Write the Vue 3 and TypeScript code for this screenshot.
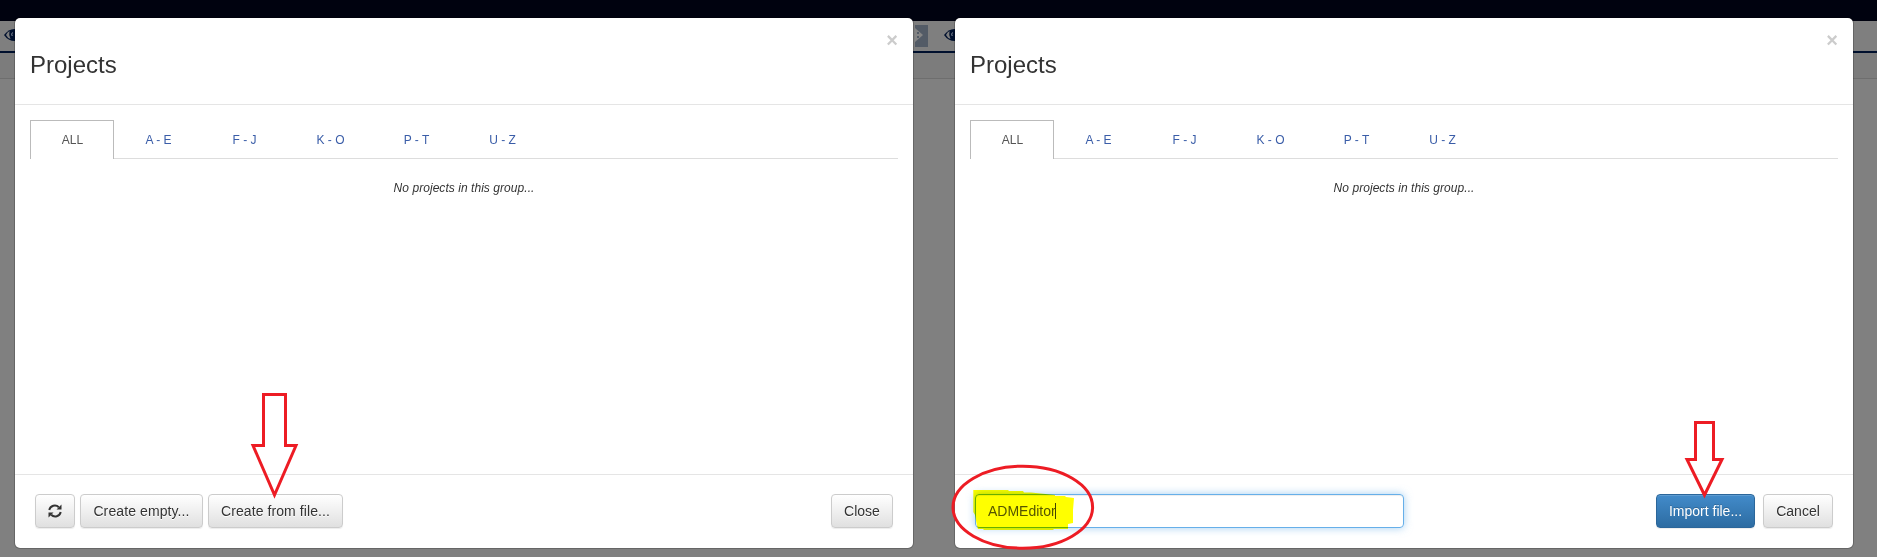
<script setup lang="ts">
interface Dialog {
  id: string
  mode: 'browse' | 'import'
}

const dialogs: Dialog[] = [
  { id: 'browse', mode: 'browse' },
  { id: 'import', mode: 'import' },
]
const tabs: string[] = ['ALL', 'A - E', 'F - J', 'K - O', 'P - T', 'U - Z']
const projectName = 'ADMEditor'
</script>

<template>
  <div class="screen">
    <div class="topbar"></div>
    <div class="toolbar"></div>
    <div class="subbar"></div>

    <svg class="overlay" width="1877" height="557" viewBox="0 0 1877 557">
      <g v-for="x in [0, 940]" :key="x" :transform="`translate(${x} 0)`">
        <path d="M4 35Q9 28.500 15 29V41Q8 41 4 35Z" fill="#00102e" />
        <path d="M6 35Q7.500 32 9.500 31Q8.500 35 10.500 39Q7.500 38 6 35Z" fill="#7e7e7e" />
        <path d="M12.500 32.500Q11 34 12.200 36" fill="none" stroke="#8a929e" />
      </g>
      <rect x="915" y="25" width="13" height="22" fill="#535b66" />
      <path d="M915 28L923 35L915 42Z" fill="#858585" />
      <path d="M917 32h2v2h-2zM917 36h2v2h-2z" fill="#535b66" />
    </svg>

    <main class="dialogs">
      <section v-for="d in dialogs" :key="d.id" class="modal">
        <header class="modal-header">
          <h3>Projects</h3>
          <span class="dismiss">×</span>
        </header>
        <div class="modal-body">
          <ul class="tabs">
            <li v-for="(t, i) in tabs" :key="t" :class="{ active: i === 0 }">{{ t }}</li>
          </ul>
          <p class="empty">No projects in this group...</p>
        </div>
        <footer class="modal-footer">
          <template v-if="d.mode === 'browse'">
            <button class="btn icon-btn" aria-label="Refresh">
              <svg width="14" height="14" viewBox="0 0 14 14">
                <path d="M1.300 6A5.600 5.600 0 0 1 10.800 3.300M12.700 8A5.600 5.600 0 0 1 3.200 10.700" fill="none" stroke="#333" stroke-width="2" />
                <path d="M13.500 0.500V5.500H8.500ZM0.500 13.500V8.500H5.500Z" fill="#333" />
              </svg>
            </button>
            <button class="btn empty-btn">Create empty...</button>
            <button class="btn file-btn">Create from file...</button>
            <button class="btn close-btn">Close</button>
          </template>
          <template v-else>
            <div class="field">{{ projectName }}<i class="caret"></i></div>
            <button class="btn primary">Import file...</button>
            <button class="btn cancel-btn">Cancel</button>
          </template>
        </footer>
      </section>
    </main>

    <svg class="overlay marker" width="1877" height="557" viewBox="0 0 1877 557">
      <path d="M973.300 490H1008L1009 491H1023L1024 492.500H1031L1055 495V496H1065L1066 497L1074 498L1073 510V523L1068 524V529H1054L1053 530H984L983 529H978L977 526L975 515L973.300 512Z" fill="#ff0" />
    </svg>
    <svg class="overlay" width="1877" height="557" viewBox="0 0 1877 557">
      <g fill="none" stroke="#ed1c24" stroke-width="3">
        <path d="M263.500 394.500H285.500V445.500H296L274.500 495L253 445.500H263.500Z" />
        <path d="M1695.500 422.500H1713.500V459.500H1722L1704.500 495L1687 459.500H1695.500Z" />
        <ellipse cx="1022.800" cy="507.200" rx="69.800" ry="41" />
      </g>
    </svg>
  </div>
</template>

<style>
body {
  margin: 0;
}
</style>

<style scoped>
.screen {
  position: relative;
  width: 1877px;
  height: 557px;
  overflow: hidden;
  background: #808080;
  font-family: "Liberation Sans", Arial, sans-serif;
  color: #333;
}
.topbar {
  height: 21px;
  background: #00020f;
}
.toolbar {
  height: 30px;
  background: #7f7f7f;
  border-bottom: 2px solid #00102e;
}
.subbar {
  height: 25px;
  background: #7c7c7c;
  border-bottom: 1px solid #6e6e6e;
}
.overlay {
  position: absolute;
  left: 0;
  top: 0;
  pointer-events: none;
}
.marker {
  mix-blend-mode: multiply;
}
.dialogs {
  position: absolute;
  left: 14px;
  top: 17px;
  display: flex;
  gap: 40px;
}
.modal {
  box-sizing: border-box;
  width: 900px;
  height: 532px;
  display: flex;
  flex-direction: column;
  background: #fff;
  background-clip: padding-box;
  border: 1px solid rgba(0, 0, 0, 0.2);
  border-radius: 6px;
}
.modal-header {
  display: flex;
  justify-content: space-between;
  height: 86px;
  padding: 0 15px;
  border-bottom: 1px solid #e5e5e5;
}
h3 {
  margin: 34px 0 0;
  font-size: 24px;
  line-height: 26px;
  font-weight: 400;
}
.dismiss {
  margin-top: 11px;
  font-size: 20px;
  line-height: 22px;
  font-weight: 700;
  color: #ccc;
}
.modal-body {
  flex: 1;
  padding: 15px;
}
.tabs {
  display: flex;
  gap: 2px;
  margin: 0;
  padding: 0;
  list-style: none;
  height: 38px;
  border-bottom: 1px solid #ddd;
}
.tabs li {
  box-sizing: border-box;
  width: 84px;
  height: 38px;
  padding: 1px 0 0 1px;
  font-size: 12px;
  line-height: 38px;
  text-align: center;
  color: #3a5da8;
}
.tabs .active {
  height: 39px;
  padding-top: 0;
  background: #fff;
  border: 1px solid #bbb;
  border-bottom: 0;
  color: #555;
}
.empty {
  margin: 21px 0 0;
  font-size: 12px;
  line-height: 17px;
  font-style: italic;
  letter-spacing: 0.05px;
  text-align: center;
}
.modal-footer {
  display: flex;
  height: 54px;
  padding: 19px 20px 0;
  border-top: 1px solid #e5e5e5;
}
.btn {
  box-sizing: border-box;
  height: 34px;
  padding: 0;
  border: 1px solid #ccc;
  border-radius: 4px;
  background: linear-gradient(#fff, #e0e0e0);
  box-shadow: inset 0 1px 0 rgba(255, 255, 255, 0.15), 0 1px 1px rgba(0, 0, 0, 0.075);
  font: 14px/20px "Liberation Sans", Arial, sans-serif;
  color: #333;
  text-shadow: 0 1px 0 #fff;
}
.icon-btn {
  display: flex;
  align-items: center;
  justify-content: center;
  width: 40px;
  margin-right: 5px;
}
.empty-btn {
  width: 123px;
  margin-right: 5px;
  letter-spacing: 0.1px;
}
.file-btn {
  width: 135px;
  letter-spacing: 0.08px;
}
.close-btn {
  width: 62px;
  margin-left: auto;
}
.field {
  box-sizing: border-box;
  display: flex;
  align-items: center;
  width: 429px;
  height: 34px;
  padding: 0 12px;
  border: 1px solid #66afe9;
  border-radius: 4px;
  box-shadow: inset 0 1px 1px rgba(0, 0, 0, 0.075), 0 0 8px rgba(102, 175, 233, 0.6);
  font-size: 14px;
  color: #555;
}
.caret {
  width: 1px;
  height: 16px;
  margin-left: -1px;
  background: #444;
}
.primary {
  width: 99px;
  margin-left: auto;
  margin-right: 8px;
  border-color: #2b669a;
  background: linear-gradient(#428bca, #2d6ca2);
  color: #fff;
  text-shadow: 0 -1px 0 rgba(0, 0, 0, 0.2);
}
.cancel-btn {
  width: 70px;
}
</style>
